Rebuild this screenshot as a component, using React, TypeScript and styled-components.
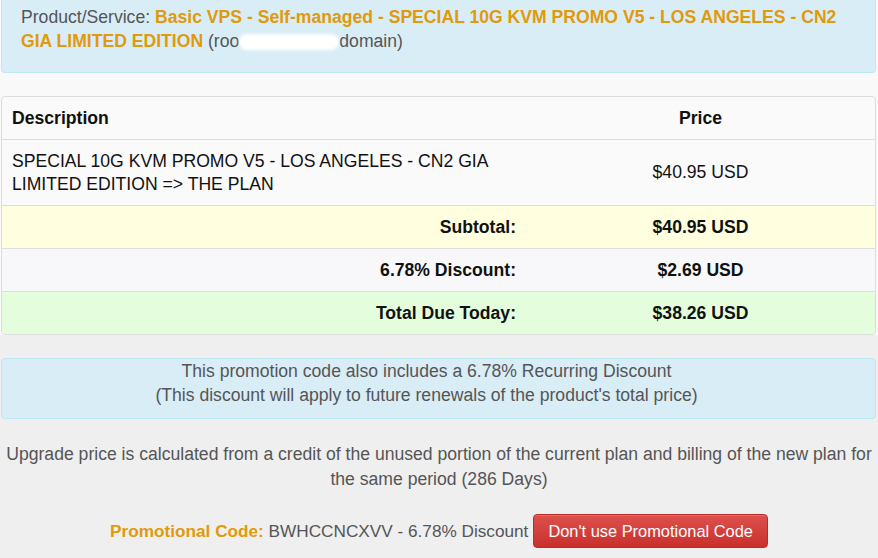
import React from 'react';
import styled, { createGlobalStyle } from 'styled-components';

const GlobalStyle = createGlobalStyle`
  body {
    margin: 0;
    background: #efefef;
    font-family: Arial, "Liberation Sans", Helvetica, sans-serif;
    font-size: 17.6px;
    color: #333;
  }
`;

const Page = styled.div`
  width: 878px;
  overflow: hidden;
`;

const TopSection = styled.div`
  background: #f9f9f9;
  padding: 0 2px 0 1px;
`;

const InfoBox = styled.div<{ $center?: boolean; $top?: boolean }>`
  background: #d9edf7;
  border: 1px solid #bce8f1;
  border-top-width: ${(p) => (p.$top ? 0 : 1)}px;
  border-radius: ${(p) => (p.$top ? '0 0 4px 4px' : '4px')};
  color: #555;
  line-height: 24px;
  text-align: ${(p) => (p.$center ? 'center' : 'left')};
  padding: ${(p) => (p.$top ? '5px 19px 19px' : '0 43px 11px 19px')};
`;

const Highlight = styled.strong`
  color: #e09a0b;
  font-weight: bold;
`;

const Redact = styled.span`
  display: inline-block;
  width: 100px;
  height: 16px;
  vertical-align: -3px;
  background: #fff;
  border-radius: 8px;
  filter: blur(1.5px);
`;

const Table = styled.div`
  margin-top: 23px;
  border: 1px solid #ddd;
  border-radius: 4px;
  background: #fafafa;
  overflow: hidden;
`;

const Row = styled.div<{ $bg?: string; $first?: boolean }>`
  display: grid;
  grid-template-columns: 523px 1fr;
  align-items: center;
  background: ${(p) => p.$bg || 'transparent'};
  border-top: ${(p) => (p.$first ? 'none' : '1px solid #ddd')};
  color: #111;
`;

const Cell = styled.div<{ $align?: 'left' | 'center' | 'right'; $bold?: boolean }>`
  padding: 9.5px 9px 9.5px 10px;
  line-height: 23px;
  text-align: ${(p) => p.$align || 'left'};
  font-weight: ${(p) => (p.$bold ? 'bold' : 'normal')};
`;

const Lower = styled.div`
  padding: 23px 2px 0 1px;
`;

const Note = styled.p`
  margin: 23px 0 0;
  padding: 0 6px;
  text-align: center;
  line-height: 25px;
  color: #555;
`;

const PromoLine = styled.div`
  margin-top: 22px;
  display: flex;
  justify-content: center;
  align-items: center;
  gap: 5px;
  color: #555;
  font-size: 17.2px;
`;

const DangerButton = styled.button`
  font-family: inherit;
  font-size: 16.4px;
  color: #fff;
  height: 34px;
  padding: 0 14px;
  border: 1px solid #b92c28;
  border-radius: 4px;
  background: linear-gradient(to bottom, #dd514d 0%, #c9302c 100%);
  box-shadow: inset 0 1px 0 rgba(255, 255, 255, 0.15);
  cursor: pointer;
`;

const rows = [
  { label: 'Subtotal:', value: '$40.95 USD', bg: '#ffffe0' },
  { label: '6.78% Discount:', value: '$2.69 USD', bg: '#f8f8fa' },
  { label: 'Total Due Today:', value: '$38.26 USD', bg: '#e4fddc' },
];

export default function App() {
  return (
    <Page>
      <GlobalStyle />
      <TopSection>
        <InfoBox $top>
          Product/Service:{' '}
          <Highlight>
            Basic VPS - Self-managed - SPECIAL 10G KVM PROMO V5 - LOS ANGELES - CN2 GIA LIMITED
            EDITION
          </Highlight>{' '}
          (roo
          <Redact />
          domain)
        </InfoBox>
        <Table>
          <Row $first>
            <Cell $bold>Description</Cell>
            <Cell $bold $align="center">
              Price
            </Cell>
          </Row>
          <Row>
            <Cell>SPECIAL 10G KVM PROMO V5 - LOS ANGELES - CN2 GIA LIMITED EDITION =&gt; THE PLAN</Cell>
            <Cell $align="center">$40.95 USD</Cell>
          </Row>
          {rows.map((r) => (
            <Row key={r.label} $bg={r.bg}>
              <Cell $bold $align="right">
                {r.label}
              </Cell>
              <Cell $bold $align="center">
                {r.value}
              </Cell>
            </Row>
          ))}
        </Table>
      </TopSection>
      <Lower>
        <InfoBox $center>
          This promotion code also includes a 6.78% Recurring Discount
          <br />
          (This discount will apply to future renewals of the product's total price)
        </InfoBox>
      </Lower>
      <Note>
        Upgrade price is calculated from a credit of the unused portion of the current plan and billing
        of the new plan for the same period (286 Days)
      </Note>
      <PromoLine>
        <span>
          <Highlight>Promotional Code:</Highlight> BWHCCNCXVV - 6.78% Discount
        </span>
        <DangerButton>Don't use Promotional Code</DangerButton>
      </PromoLine>
    </Page>
  );
}
